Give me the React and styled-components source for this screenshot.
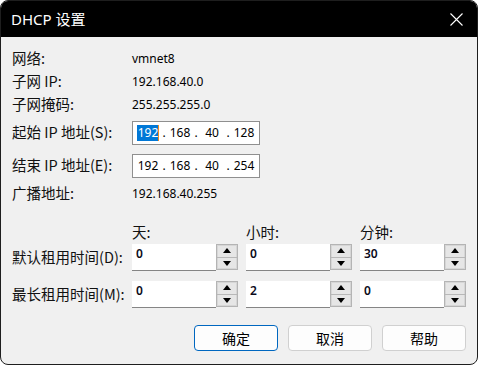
import styled, { createGlobalStyle } from 'styled-components';

const GlobalStyle = createGlobalStyle`
  html, body {
    margin: 0;
    padding: 0;
    background: #ffffff;
  }
  * {
    box-sizing: border-box;
  }
`;

const Window = styled.div`
  width: 478px;
  height: 365px;
  display: flex;
  flex-direction: column;
  border: 1px solid #1e1e1e;
  border-radius: 8px;
  overflow: hidden;
  background: #f0f0f0;
  font-family: "Noto Sans", "Noto Sans CJK SC", sans-serif;
`;

const TitleBar = styled.div`
  height: 36px;
  flex: none;
  background: #000000;
  display: flex;
  align-items: center;
  justify-content: space-between;
  padding: 0 14px 0 10px;
`;

const Title = styled.span`
  color: #ffffff;
  font-size: 15px;
  font-family: "Noto Sans", "Noto Sans CJK SC", sans-serif;
  line-height: 1;
  margin-top: 1px;
`;

const CloseButton = styled.svg`
  display: block;
  width: 13px;
  height: 13px;
`;

const Content = styled.div`
  flex: 1;
  display: flex;
  flex-direction: column;
  padding: 10px 11px 0 11px;
`;

const InfoGrid = styled.div`
  display: grid;
  grid-template-columns: 120px 1fr;
  grid-template-rows: 23px 23px 23px 33px 33px 23px;
  align-items: center;
`;

const Label = styled.span`
  font-family: "Noto Sans CJK SC", sans-serif;
  font-size: 14.5px;
  color: #111111;
  white-space: nowrap;
  line-height: 1;
`;

const Value = styled.span`
  font-family: "Noto Sans", sans-serif;
  font-size: 12px;
  color: #000000;
  line-height: 1;
`;

const IpField = styled.div`
  width: 128px;
  height: 24px;
  background: #ffffff;
  border: 1px solid #8f8f8f;
  display: flex;
  align-items: center;
  padding-left: 3px;
  font-family: "Noto Sans", sans-serif;
  font-size: 12px;
  color: #000000;
`;

const Octet = styled.span`
  width: 24px;
  text-align: center;
  line-height: 16px;
`;

const Selected = styled.span`
  display: inline-block;
  background: #0078d7;
  color: #ffffff;
  border-right: 1px solid #f28a1e;
  padding: 0 0 0 1px;
`;

const Dot = styled.span`
  width: 8px;
  text-align: center;
`;

const LeaseRow = styled.div`
  display: grid;
  grid-template-columns: 120px 114px 114px 1fr;
  height: ${p => p.$height}px;
  margin-top: ${p => p.$gap}px;
  align-items: center;
`;

const SpinBox = styled.div`
  display: flex;
  width: 106px;
  height: 27px;
`;

const SpinInput = styled.div`
  width: 84px;
  height: 27px;
  background: #ffffff;
  border-bottom: 1px solid #858585;
  padding: 2px 4px;
  font-family: "Noto Sans", sans-serif;
  font-size: 12px;
  font-weight: 600;
  color: #0a0a1a;
  line-height: 16px;
`;

const SpinButtons = styled.div`
  width: 22px;
  height: 26px;
  display: flex;
  flex-direction: column;
  border: 1px solid #b4b4b4;
  box-shadow: inset 0 0 0 1px #d6d6d6;
  background: #e6e6e6;
`;

const SpinHalf = styled.div`
  flex: 1;
  display: flex;
  align-items: center;
  justify-content: center;
  border-top: ${p => (p.$down ? '1px solid #b8b8b8' : 'none')};
`;

const Arrow = styled.svg`
  display: block;
  width: 8px;
  height: 5px;
`;

const ButtonRow = styled.div`
  display: flex;
  justify-content: flex-end;
  gap: 10px;
  margin-top: 17px;
`;

const Button = styled.button`
  width: 84px;
  height: 26px;
  border-radius: 4px;
  border: 1px solid ${p => (p.$primary ? '#0067c0' : '#d0d0d0')};
  background: #fdfdfd;
  font-family: "Noto Sans CJK SC", sans-serif;
  font-size: 14px;
  color: #000000;
  padding: 0;
  line-height: 1;
`;

const Spinner = ({ value }) => (
  <SpinBox>
    <SpinInput>{value}</SpinInput>
    <SpinButtons>
      <SpinHalf>
        <Arrow viewBox="0 0 8 5">
          <polygon points="4,0 8,5 0,5" fill="#000" />
        </Arrow>
      </SpinHalf>
      <SpinHalf $down>
        <Arrow viewBox="0 0 8 5">
          <polygon points="0,0 8,0 4,5" fill="#000" />
        </Arrow>
      </SpinHalf>
    </SpinButtons>
  </SpinBox>
);

const IpAddress = ({ parts, selectFirst }) => (
  <IpField>
    {parts.map((part, i) => (
      <span key={i} style={{ display: 'contents' }}>
        {i > 0 && <Dot>.</Dot>}
        <Octet>{selectFirst && i === 0 ? <Selected>{part}</Selected> : part}</Octet>
      </span>
    ))}
  </IpField>
);

const App = () => {
  return (
    <>
      <GlobalStyle />
      <Window>
        <TitleBar>
          <Title>DHCP 设置</Title>
          <CloseButton viewBox="0 0 13 13">
            <path d="M0.5 0.5 L12.5 12.5 M12.5 0.5 L0.5 12.5" stroke="#fff" strokeWidth="1.1" />
          </CloseButton>
        </TitleBar>
        <Content>
          <InfoGrid>
            <Label>网络:</Label>
            <Value>vmnet8</Value>
            <Label>子网 IP:</Label>
            <Value>192.168.40.0</Value>
            <Label>子网掩码:</Label>
            <Value>255.255.255.0</Value>
            <Label>起始 IP 地址(S):</Label>
            <IpAddress parts={['192', '168', '40', '128']} selectFirst />
            <Label>结束 IP 地址(E):</Label>
            <IpAddress parts={['192', '168', '40', '254']} />
            <Label>广播地址:</Label>
            <Value>192.168.40.255</Value>
          </InfoGrid>

          <LeaseRow $height={24} $gap={15}>
            <span />
            <Label>天:</Label>
            <Label>小时:</Label>
            <Label>分钟:</Label>
          </LeaseRow>
          <LeaseRow $height={27} $gap={0}>
            <Label>默认租用时间(D):</Label>
            <Spinner value="0" />
            <Spinner value="0" />
            <Spinner value="30" />
          </LeaseRow>
          <LeaseRow $height={27} $gap={10}>
            <Label>最长租用时间(M):</Label>
            <Spinner value="0" />
            <Spinner value="2" />
            <Spinner value="0" />
          </LeaseRow>

          <ButtonRow>
            <Button $primary>确定</Button>
            <Button>取消</Button>
            <Button>帮助</Button>
          </ButtonRow>
        </Content>
      </Window>
    </>
  );
};

export default App;
